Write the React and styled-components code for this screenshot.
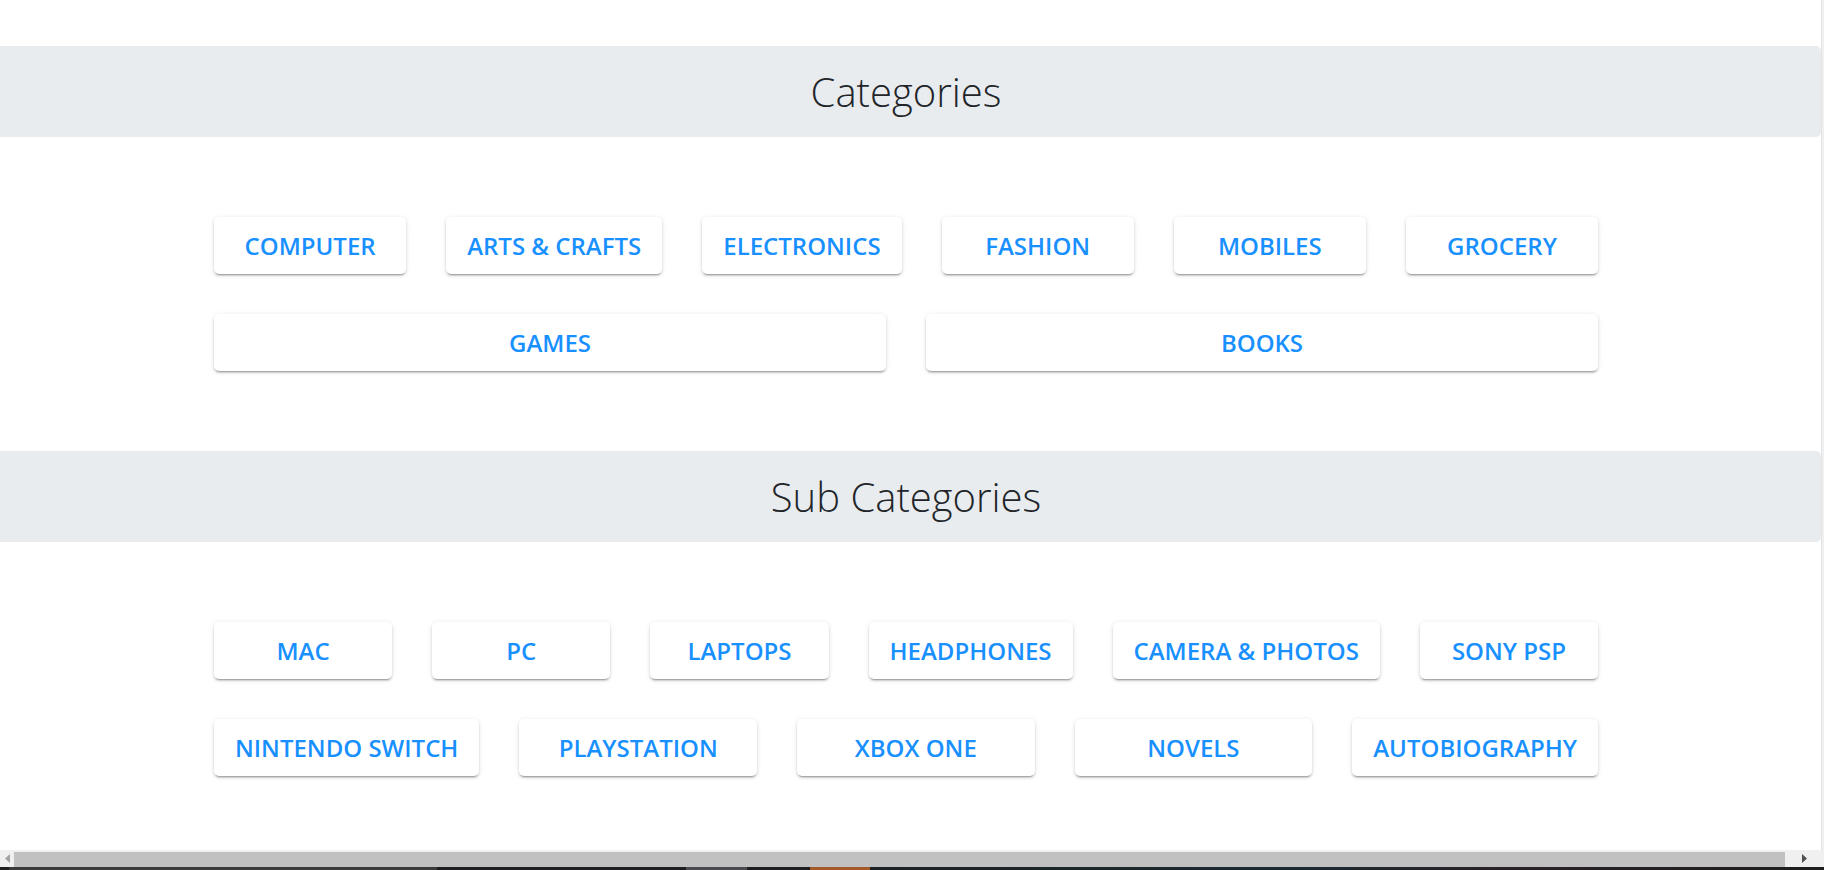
import React from "react";
import styled, { createGlobalStyle } from "styled-components";

const GlobalStyle = createGlobalStyle`
  html, body { margin: 0; padding: 0; background: #ffffff; overflow: hidden; }
  body { font-family: "Open Sans", "Noto Sans", Arial, sans-serif; }
  * { box-sizing: border-box; }
`;

const Screen = styled.div`
  width: 1824px;
  height: 870px;
  display: flex;
  flex-direction: column;
  background: #ffffff;
`;

const Viewport = styled.div`
  flex: 1;
  min-height: 0;
  display: flex;
`;

const Page = styled.main`
  flex: 1;
  min-width: 0;
  padding-top: 46px;
  display: flex;
  flex-direction: column;
`;

const VScrollEdge = styled.div`
  width: 3px;
  background: #f0f0f0;
  border-left: 1px solid #e4e4e4;
`;

const SectionHeader = styled.h2`
  margin: 0;
  height: 91px;
  display: flex;
  align-items: center;
  justify-content: center;
  padding-right: 9px;
  background: #e9ecef;
  border-radius: 0 5px 5px 0;
  font-family: "Open Sans", "Noto Sans", Arial, sans-serif;
  font-weight: 300;
  font-size: 40px;
  color: #212529;
`;

const SectionBody = styled.div`
  padding: 80px 9px 80px 0;
`;

const Grid = styled.div`
  width: 1384px;
  margin: 0 auto;
  display: flex;
  flex-direction: column;
  gap: 40px;
`;

const Row = styled.div`
  display: flex;
  gap: 40px;
`;

const CategoryButton = styled.button`
  flex: 1 1 0;
  min-width: max-content;
  height: 57px;
  padding: 0 21px;
  border: none;
  border-radius: 5px;
  background: #ffffff;
  color: #1890ff;
  font-family: "Open Sans", "Noto Sans", Arial, sans-serif;
  font-weight: 600;
  font-size: 24px;
  white-space: nowrap;
  text-transform: uppercase;
  cursor: pointer;
  box-shadow: 0 3px 1px -2px rgba(0, 0, 0, 0.2), 0 2px 2px 0 rgba(0, 0, 0, 0.14),
    0 1px 5px 0 rgba(0, 0, 0, 0.12);
`;

const HScrollbar = styled.div`
  height: 17px;
  display: flex;
  align-items: stretch;
  background: #f0f0f0;
`;

const ArrowButton = styled.div`
  width: ${(p) => p.$w}px;
  display: flex;
  align-items: center;
  justify-content: center;
`;

const Thumb = styled.div`
  flex: 1;
  margin: 2px 0 0;
  background: #c1c1c1;
`;

const Taskbar = styled.div`
  height: 3px;
  background: linear-gradient(
    to right,
    #202020 0px,
    #202020 9px,
    #3a3a3a 9px,
    #3a3a3a 437px,
    #1e1e22 437px,
    #1e1e22 686px,
    #4a4a50 686px,
    #4a4a50 747px,
    #1e1e22 747px,
    #1e1e22 810px,
    #a45a2a 810px,
    #a45a2a 870px,
    #1d2226 870px,
    #1c2a30 1300px,
    #2a2228 1500px,
    #1e1e1e 1824px
  );
`;

const categories = [
  ["Computer", "Arts & Crafts", "Electronics", "Fashion", "Mobiles", "Grocery"],
  ["Games", "Books"],
];

const subCategories = [
  ["Mac", "PC", "Laptops", "Headphones", "Camera & Photos", "Sony PSP"],
  ["Nintendo Switch", "PlayStation", "Xbox One", "Novels", "Autobiography"],
];

function Section({ title, rows }) {
  return (
    <section>
      <SectionHeader>{title}</SectionHeader>
      <SectionBody>
        <Grid>
          {rows.map((row, i) => (
            <Row key={i}>
              {row.map((label) => (
                <CategoryButton key={label}>{label}</CategoryButton>
              ))}
            </Row>
          ))}
        </Grid>
      </SectionBody>
    </section>
  );
}

export default function App() {
  return (
    <>
      <GlobalStyle />
      <Screen>
        <Viewport>
          <Page>
            <Section title="Categories" rows={categories} />
            <Section title="Sub Categories" rows={subCategories} />
          </Page>
          <VScrollEdge />
        </Viewport>
        <HScrollbar>
          <ArrowButton $w={14}>
            <svg width="5" height="9" viewBox="0 0 5 9">
              <path d="M5 0 L0 4.5 L5 9 Z" fill="#a3a3a3" />
            </svg>
          </ArrowButton>
          <Thumb />
          <ArrowButton $w={39}>
            <svg width="5" height="9" viewBox="0 0 5 9">
              <path d="M0 0 L5 4.5 L0 9 Z" fill="#505050" />
            </svg>
          </ArrowButton>
        </HScrollbar>
        <Taskbar />
      </Screen>
    </>
  );
}
